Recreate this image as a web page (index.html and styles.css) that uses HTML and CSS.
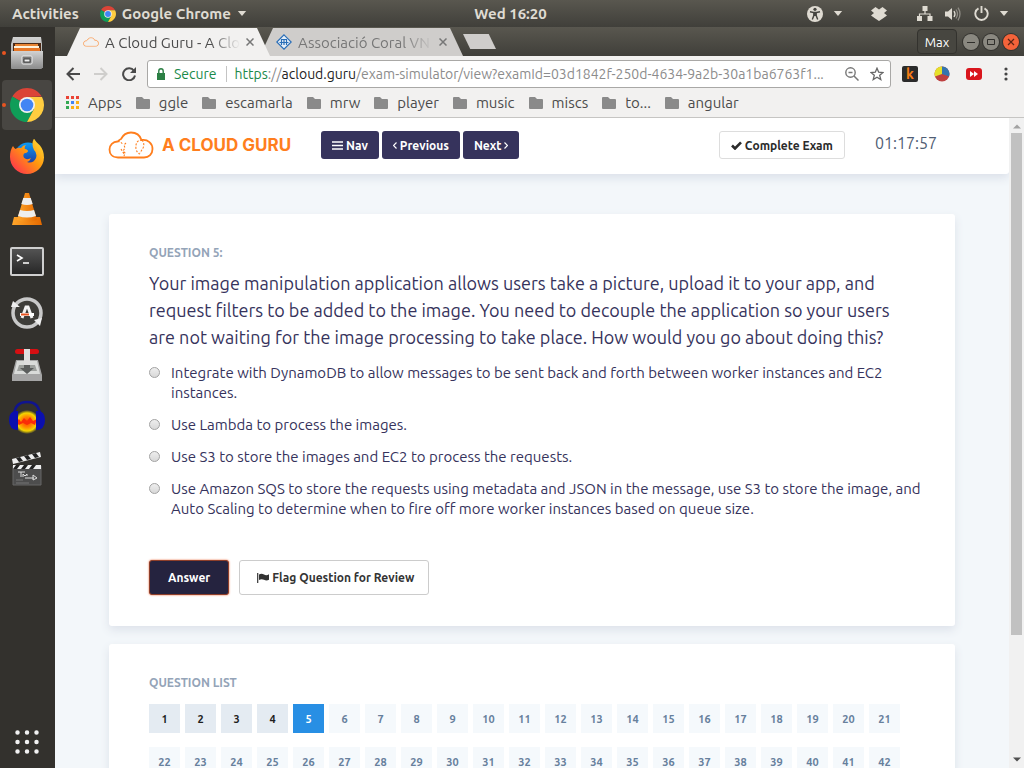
FILE: index.html
```html
<!DOCTYPE html>
<html lang="en">
<head>
<meta charset="utf-8">
<meta name="viewport" content="width=device-width, initial-scale=1">
<title>A Cloud Guru - A Cloud Guru</title>
<link rel="stylesheet" href="styles.css">
</head>
<body>
<svg class="defs" aria-hidden="true">
  <defs>
    <linearGradient id="metal" x1="0" y1="0" x2="0" y2="1"><stop offset="0" stop-color="#d2d2d2"/><stop offset="1" stop-color="#8f8f8f"/></linearGradient>
    <linearGradient id="screen" x1="0" y1="0" x2="0" y2="1"><stop offset="0" stop-color="#555"/><stop offset="1" stop-color="#252525"/></linearGradient>
    <linearGradient id="fox" x1="1" y1="0" x2="0" y2="1"><stop offset="0" stop-color="#ffe53b"/><stop offset=".45" stop-color="#ff980e"/><stop offset="1" stop-color="#ff1f5a"/></linearGradient>
    <linearGradient id="foxblue" x1="0" y1="0" x2="0" y2="1"><stop offset="0" stop-color="#0a9bf5"/><stop offset="1" stop-color="#24218a"/></linearGradient>
    <linearGradient id="cone" x1="0" x2="1"><stop offset="0" stop-color="#ffa62b"/><stop offset="1" stop-color="#e56a00"/></linearGradient>
    <radialGradient id="wave"><stop offset="0" stop-color="#ff3a00"/><stop offset=".45" stop-color="#ff8a00"/><stop offset=".75" stop-color="#f3d500"/><stop offset="1" stop-color="#f3d500" stop-opacity="0"/></radialGradient>
    <symbol id="chrome" viewBox="0 0 34 34">
      <path d="M17 17L2.300 8.500A17 17 0 0 1 31.700 8.500L17 9Z" fill="#db4437"/>
      <path d="M17 17L2.300 8.500A17 17 0 0 0 17 34L24 21Z" fill="#0f9d58"/>
      <path d="M17 9H32A17 17 0 0 1 17 34L24 21Z" fill="#ffcd40"/>
      <circle cx="17" cy="17" r="8" fill="#f1f1f1"/><circle cx="17" cy="17" r="6.300" fill="#4285f4"/>
    </symbol>
    <symbol id="folder" viewBox="0 0 14 12"><path d="M1 0h5l2 2h5a1 1 0 0 1 1 1v8a1 1 0 0 1-1 1H1a1 1 0 0 1-1-1V1a1 1 0 0 1 1-1z" fill="#8a8a8a"/></symbol>
    <symbol id="cloud" viewBox="0 0 46 28"><path d="M10 26.500C4 26.500 1.500 22.500 1.500 18.500C1.500 14 5 10.500 9.500 10.500C10.500 10.500 11 8.500 13 8C15 4 18.500 1.500 23 1.500C28.500 1.500 32 4.500 33.500 9C40 8 44.500 12.500 44.500 18C44.500 23 41 26.500 36 26.500Z" fill="none" stroke="#ff7e1d" stroke-width="1.800"/></symbol>
    <symbol id="caret" viewBox="0 0 10 6"><path d="M0 0h10L5 6z" fill="currentColor"/></symbol>
    <symbol id="cross" viewBox="0 0 8 8"><path d="M.5.5l7 7M7.500.500l-7 7" stroke="currentColor" stroke-width="1.500"/></symbol>
  </defs>
</svg>

<header class="panel">
  <div class="panel-side">
    <button class="panel-btn" type="button">Activities</button>
    <button class="panel-btn" type="button"><svg class="app-logo"><use href="#chrome"/></svg>Google Chrome<svg class="caret"><use href="#caret"/></svg></button>
  </div>
  <time class="clock">Wed 16:20</time>
  <div class="panel-side panel-status">
    <svg width="16" height="16" viewBox="0 0 16 16"><circle cx="8" cy="8" r="8" fill="#dfdbd2"/><circle cx="8" cy="3.300" r="1.600" fill="#45443f"/><path d="M3 5.800l3.500.7h3l3.500-.7M6.800 6.500v3L5.300 13.500M9.200 6.500v3l1.500 4M8 6.500V10" fill="none" stroke="#45443f" stroke-width="1.400"/></svg>
    <svg class="caret access-caret"><use href="#caret"/></svg>
    <svg class="dropbox" width="16" height="14" viewBox="0 0 16 14"><path d="M4.500 0L8 2.500L11.500 0L16 3.500L13 6L16 8.500L12.500 11L8 14L3.500 11L0 8.500L3 6L0 3.500z" fill="#dfdbd2"/></svg>
    <svg class="network" width="16" height="15" viewBox="0 0 16 15"><path d="M5.500 0h5v5h-5zM0 10h5v5H0zM10.500 10h5v5h-5z" fill="#dfdbd2"/><path d="M8 5v3M2.500 10.500V8h10.500v2.500" stroke="#dfdbd2" fill="none" stroke-width="1.200"/></svg>
    <svg class="sound" width="16" height="14" viewBox="0 0 16 14"><path d="M0 4.500h3L7 1v12L3 9.500H0z" fill="#dfdbd2"/><path d="M9 4q2 3 0 6" stroke="#dfdbd2" stroke-width="1.300" fill="none"/><path d="M11 2.500q3 4.500 0 9M13 .7q4 6.300 0 12.600" stroke="#8f8c84" stroke-width="1.300" fill="none"/></svg>
    <svg class="power" width="15" height="15" viewBox="0 0 15 15"><path d="M4.500 2.300a6.200 6.200 0 1 0 6 0M7.500 0v7" stroke="#dfdbd2" stroke-width="1.900" fill="none"/></svg>
    <svg class="caret"><use href="#caret"/></svg>
  </div>
</header>

<div class="desktop">
  <nav class="dock" aria-label="Dock">
    <button class="dock-item running" type="button" aria-label="Files"><svg width="34" height="34" viewBox="0 0 34 34"><path d="M3 1h28l1 7v24a1 1 0 0 1-1 1H2a1 1 0 0 1-1-1V8z" fill="url(#metal)"/><path d="M3 7h28v8H3z" fill="#4d2b17"/><path d="M5 8h23v2H5z" fill="#e88434"/><path d="M4 10h25v2H4z" fill="#fff2dc"/><path d="M4 12h26v3H4z" fill="#e77727"/><path d="M1 15h32v17H1z" fill="url(#metal)"/><rect x="12" y="20" width="10" height="8" rx="1" fill="#777" stroke="#eee"/><path d="M14 23h6v3h-6z" fill="#eee" stroke="#444"/></svg></button>
    <button class="dock-item running focused" type="button" aria-label="Google Chrome"><svg width="34" height="34"><use href="#chrome"/></svg></button>
    <button class="dock-item" type="button" aria-label="Firefox"><svg width="34" height="36" viewBox="0 0 34 36"><circle cx="18" cy="17" r="13.500" fill="url(#foxblue)"/><path d="M3 7q1 2 2.500 3q3-2 5.500-1q2-3 5-3q-2 2-1 4q3 .5 3 2.500q-1 1.500-4 2q-2 4 2 5.500q3 .5 5-1q-1 3-4 4q6 2 9-4q1.500-5-2-8q-3-6 0-11.500q2 4 6 7q4 5 4 12A17 17 0 0 1 17 35A17 17 0 0 1 0 18Q0 11 3 7z" fill="url(#fox)"/></svg></button>
    <button class="dock-item" type="button" aria-label="VLC"><svg width="30" height="34" viewBox="0 0 30 34"><path d="M2 25h26l2 8H0z" fill="url(#cone)"/><path d="M13 1h4l8 27q-10 4-20 0z" fill="url(#cone)"/><path d="M11.300 6h7.400l2 6q-5.700 2-11.400 0zM8 18q7 2 14 0l2 6q-9 3-18 0z" fill="#eee"/></svg></button>
    <button class="dock-item" type="button" aria-label="Terminal"><svg width="34" height="30" viewBox="0 0 34 30"><rect x="1" y="2" width="32" height="27" rx="1" fill="url(#screen)" stroke="#cfcfcf" stroke-width="2"/><path d="M7 9l5 3-5 3M13 17h6" stroke="#fff" stroke-width="1.600" fill="none"/></svg></button>
    <button class="dock-item" type="button" aria-label="Software Updater"><svg width="34" height="34" viewBox="0 0 34 34"><circle cx="17" cy="17" r="14" fill="#3e3d39" stroke="#c9c9c9" stroke-width="3.500"/><path d="M1 11l2-6 7 6zM24 24l8-2-2 8z" fill="#eee"/><path d="M12 22l4-11h2l4 11" fill="none" stroke="#f4f4f4" stroke-width="3"/><path d="M10 17h14v3H10z" fill="#fff"/><path d="M11 17.500h8v2h-8z" fill="#e95420"/></svg></button>
    <button class="dock-item" type="button" aria-label="Installer"><svg width="30" height="34" viewBox="0 0 30 34"><path d="M4 12h22l4 15v6H0v-6z" fill="#a5a5a5"/><path d="M5 13h20l3 13H2z" fill="#d9dbd9"/><path d="M7 17h16l2 6H5z" fill="#9da09d"/><rect x="3" y="1" width="24" height="5" rx="2.500" fill="#d60f12"/><path d="M12 1h6v19h4l-7 6-7-6h4z" fill="#5b5e5d"/><path d="M12 1h6v16h-6z" fill="#dedede"/></svg></button>
    <button class="dock-item" type="button" aria-label="Audacity"><svg width="36" height="34" viewBox="0 0 36 34"><ellipse cx="18" cy="22" rx="13" ry="12" fill="url(#wave)"/><path d="M7 22l3-3 2 3 3-4 3 3 3-4 3 4 4-2-2 6-4-2-4 2-4-2-4 2z" fill="#fa2b08"/><path d="M5 17Q5 2 18 2T31 17" stroke="#10148f" stroke-width="2.500" fill="none"/><path d="M9 11v19Q0 30 0 20T9 11zM27 11v19Q36 30 36 20T27 11z" fill="#0b0fae"/></svg></button>
    <button class="dock-item" type="button" aria-label="Video editor"><svg width="30" height="34" viewBox="0 0 30 34"><path d="M1 14h28v19H1z" fill="#4d4d4d" stroke="#666"/><path d="M0 7L28 0l1 5L1 12zM1 13h28v4H1z" fill="#eee"/><path d="M4 6l4-1 3 4-4 1zM12 4l4-1 3 4-4 1zM20 2l4-1 3 4-4 1zM4 13h4l-3 4H1zM12 13h4l-3 4H9zM20 13h4l-3 4h-4z" fill="#222"/><path d="M6 20h7M9 20v5M11 25v-3l2 2 2-2v2M13 26h9M21 23l4 3-4 2z" stroke="#ddd" fill="none"/><path d="M4 28h7M4 31h13" stroke="#777"/></svg></button>
    <button class="dock-item dock-apps" type="button" aria-label="Show applications"><svg width="24" height="24" viewBox="0 0 24 24"><path d="M2.500 2.500h0M12 2.500h0M21.500 2.500h0M2.500 12h0M12 12h0M21.500 12h0M2.500 21.500h0M12 21.500h0M21.500 21.500h0" stroke="#f2f2f2" stroke-width="4.500" stroke-linecap="round"/></svg></button>
  </nav>

  <div class="browser">
    <div class="tabstrip">
      <div class="tab tab-active"><svg class="tab-icon" viewBox="0 0 46 28"><use href="#cloud"/></svg><span class="tab-title">A Cloud Guru - A Clo</span><button class="tab-close" type="button" aria-label="Close tab"><svg><use href="#cross"/></svg></button></div>
      <div class="tab tab-idle"><svg class="tab-icon" viewBox="0 0 16 16"><path d="M8 .8L15.200 8L8 15.200L.8 8z" fill="#e8f0f8" stroke="#2a6fb8" stroke-width="1.200"/><path d="M3.500 8.500h9M5.500 5.500V11M8 5.500V11M10.500 5.500V11M5 5.500h6" stroke="#2a6fb8" stroke-width="1.200" fill="none"/></svg><span class="tab-title">Associació Coral VN</span><button class="tab-close" type="button" aria-label="Close tab"><svg><use href="#cross"/></svg></button></div>
      <button class="new-tab" type="button" aria-label="New tab"></button>
      <div class="window-controls">
        <button class="profile" type="button">Max</button>
        <button class="win-btn" type="button" aria-label="Minimize"><svg viewBox="0 0 16 16"><path d="M4 8.500h8" stroke="#2f2e2b"/></svg></button>
        <button class="win-btn" type="button" aria-label="Maximize"><svg viewBox="0 0 16 16"><path d="M4.500 5.500h7v5h-7z" fill="none" stroke="#2f2e2b"/></svg></button>
        <button class="win-btn win-close" type="button" aria-label="Close"><svg viewBox="0 0 16 16"><path d="M5 5l6 6M11 5l-6 6" stroke="#5a2415" stroke-width="1.200"/></svg></button>
      </div>
    </div>

    <div class="toolbar">
      <button class="tool" type="button" aria-label="Back"><svg width="14" height="14" viewBox="0 0 14 14"><path d="M14 7H1.500M7.500 1l-6 6 6 6" stroke="#4a4a4a" stroke-width="2" fill="none"/></svg></button>
      <button class="tool" type="button" aria-label="Forward"><svg width="14" height="14" viewBox="0 0 14 14"><path d="M0 7h12.500M6.500 1l6 6-6 6" stroke="#cfcecc" stroke-width="2" fill="none"/></svg></button>
      <button class="tool" type="button" aria-label="Reload"><svg width="14" height="14" viewBox="0 0 14 14"><path d="M12 3.800A6 6 0 1 0 13 8.500" stroke="#4a4a4a" stroke-width="2" fill="none"/><path d="M14 0v6H8z" fill="#4a4a4a"/></svg></button>
      <div class="omnibox">
        <svg width="8" height="12" viewBox="0 0 8 12"><path d="M0 5h8v7H0z" fill="#2c8045"/><path d="M1.800 5V3a2.200 2.200 0 0 1 4.400 0v2" stroke="#2c8045" stroke-width="1.400" fill="none"/></svg>
        <span class="secure">Secure</span>
        <span class="url"><span class="scheme">https</span>://<span class="host">acloud.guru</span>/exam-simulator/view?examId=03d1842f-250d-4634-9a2b-30a1ba6763f1...</span>
        <svg width="14" height="14" viewBox="0 0 14 14"><circle cx="5.500" cy="5.500" r="4.700" stroke="#777" stroke-width="1.400" fill="none"/><path d="M3.500 5.500h4M9 9l4.500 4.500" stroke="#777" stroke-width="1.500"/></svg>
        <svg class="star" width="14" height="14" viewBox="0 0 14 14"><path d="M7 1.200l1.700 4 4.300.3-3.300 2.800 1.100 4.300L7 10.300l-3.800 2.300 1.100-4.300L1 5.500l4.300-.3z" stroke="#666" stroke-width="1.300" fill="none"/></svg>
      </div>
      <div class="extensions">
        <button class="ext ext-k" type="button">k</button>
        <button class="ext" type="button" aria-label="Chart"><svg width="16" height="16" viewBox="0 0 16 16"><circle cx="8" cy="8" r="7.500" fill="#bf4040"/><path d="M8 8V.5A7.500 7.500 0 0 1 15 10.500z" fill="#3574ae"/><path d="M8 8V.5A7.500 7.500 0 0 0 1 10.500z" fill="#e6e02a"/></svg></button>
        <button class="ext" type="button" aria-label="Skip"><svg width="16" height="12" viewBox="0 0 16 12"><rect width="16" height="12" rx="3" fill="#d9151c"/><path d="M4 3l4 3-4 3zM8 3l4 3-4 3z" fill="#fff"/></svg></button>
        <button class="ext ext-menu" type="button" aria-label="Menu"><svg width="4" height="14" viewBox="0 0 4 14"><path d="M2 2h0M2 7h0M2 12h0" stroke="#444" stroke-width="3.200" stroke-linecap="round"/></svg></button>
      </div>
    </div>

    <nav class="bookmarks" aria-label="Bookmarks">
      <a href="#"><svg class="apps" viewBox="0 0 13 13"><path d="M0 0h3v3H0zM5 0h3v3H5zM10 0h3v3h-3z" fill="#ea4335"/><path d="M0 5h3v3H0zM0 10h3v3H0z" fill="#34a853"/><path d="M5 5h3v3H5z" fill="#4285f4"/><path d="M10 5h3v3h-3zM5 10h3v3H5zM10 10h3v3h-3z" fill="#fbb016"/></svg>Apps</a>
      <a href="#"><svg><use href="#folder"/></svg>ggle</a>
      <a href="#"><svg><use href="#folder"/></svg>escamarla</a>
      <a href="#"><svg><use href="#folder"/></svg>mrw</a>
      <a href="#"><svg><use href="#folder"/></svg>player</a>
      <a href="#"><svg><use href="#folder"/></svg>music</a>
      <a href="#"><svg><use href="#folder"/></svg>miscs</a>
      <a href="#"><svg><use href="#folder"/></svg>to...</a>
      <a href="#"><svg><use href="#folder"/></svg>angular</a>
    </nav>

    <div class="viewport">
      <div class="page">
        <header class="site-header">
          <a class="brand" href="#"><svg width="46" height="28" viewBox="0 0 46 28"><use href="#cloud"/><path d="M9.500 10.500q4 0 5 3M18 12l-2 2 1 3-2 3 2 2-1 3M13 18l3 5M34 9q-7 0-6 9 1 4 4 5M34 9q3 4 1 8l-3 5" fill="none" stroke="#ff7e1d" stroke-width="1.100" stroke-dasharray="2 1.500"/></svg><span>A CLOUD GURU</span></a>
          <div class="nav-buttons">
            <button class="btn btn-navy" type="button"><svg width="11" height="9" viewBox="0 0 11 9"><path d="M0 1h11M0 4.500h11M0 8h11" stroke="#fff" stroke-width="1.700"/></svg>Nav</button>
            <button class="btn btn-navy" type="button"><svg width="4" height="7" viewBox="0 0 4 7"><path d="M3.500.5l-3 3 3 3" stroke="#fff" stroke-width="1.200" fill="none"/></svg>Previous</button>
            <button class="btn btn-navy" type="button">Next<svg width="4" height="7" viewBox="0 0 4 7"><path d="M.5.5l3 3-3 3" stroke="#fff" stroke-width="1.200" fill="none"/></svg></button>
          </div>
          <button class="btn btn-light" type="button"><svg width="11" height="9" viewBox="0 0 11 9"><path d="M1 4.500l3 3L10 1.300" stroke="#2b2b2b" stroke-width="2.600" fill="none"/></svg>Complete Exam</button>
          <span class="timer">01:17:57</span>
        </header>

        <main class="content">
          <form class="card">
            <p class="eyebrow">QUESTION 5:</p>
            <h1 class="question">Your image manipulation application allows users take a picture, upload it to your app, and request filters to be added to the image. You need to decouple the application so your users are not waiting for the image processing to take place. How would you go about doing this?</h1>
            <div class="options">
              <label class="option"><input type="radio" name="answer"><span>Integrate with DynamoDB to allow messages to be sent back and forth between worker instances and EC2 instances.</span></label>
              <label class="option"><input type="radio" name="answer"><span>Use Lambda to process the images.</span></label>
              <label class="option"><input type="radio" name="answer"><span>Use S3 to store the images and EC2 to process the requests.</span></label>
              <label class="option"><input type="radio" name="answer"><span>Use Amazon SQS to store the requests using metadata and JSON in the message, use S3 to store the image, and Auto Scaling to determine when to fire off more worker instances based on queue size.</span></label>
            </div>
            <div class="actions">
              <button class="btn btn-answer" type="button">Answer</button>
              <button class="btn btn-flag" type="button"><svg width="12" height="10" viewBox="0 0 12 10"><path d="M.7 0v10" stroke="#333" stroke-width="1.200"/><path d="M2 1.500q2.500-1.500 5 0t5-.3v5.600q-2.500 1.300-5 0t-5 .3z" fill="#333"/></svg>Flag Question for Review</button>
            </div>
          </form>

          <section class="card">
            <h2 class="eyebrow">QUESTION LIST</h2>
            <div class="numbers">
              <button class="num done" type="button">1</button><button class="num done" type="button">2</button><button class="num done" type="button">3</button><button class="num done" type="button">4</button><button class="num current" type="button">5</button><button class="num" type="button">6</button><button class="num" type="button">7</button><button class="num" type="button">8</button><button class="num" type="button">9</button><button class="num" type="button">10</button><button class="num" type="button">11</button><button class="num" type="button">12</button><button class="num" type="button">13</button><button class="num" type="button">14</button><button class="num" type="button">15</button><button class="num" type="button">16</button><button class="num" type="button">17</button><button class="num" type="button">18</button><button class="num" type="button">19</button><button class="num" type="button">20</button><button class="num" type="button">21</button>
              <button class="num" type="button">22</button><button class="num" type="button">23</button><button class="num" type="button">24</button><button class="num" type="button">25</button><button class="num" type="button">26</button><button class="num" type="button">27</button><button class="num" type="button">28</button><button class="num" type="button">29</button><button class="num" type="button">30</button><button class="num" type="button">31</button><button class="num" type="button">32</button><button class="num" type="button">33</button><button class="num" type="button">34</button><button class="num" type="button">35</button><button class="num" type="button">36</button><button class="num" type="button">37</button><button class="num" type="button">38</button><button class="num" type="button">39</button><button class="num" type="button">40</button><button class="num" type="button">41</button><button class="num" type="button">42</button>
            </div>
          </section>
        </main>
      </div>
      <div class="scrollbar" aria-hidden="true">
        <svg viewBox="0 0 8 4"><path d="M4 0l4 4H0z" fill="#a3a3a3"/></svg>
        <div class="track"><div class="thumb"></div></div>
        <svg viewBox="0 0 8 4"><path d="M0 0h8L4 4z" fill="#505050"/></svg>
      </div>
    </div>
  </div>
</div>
</body>
</html>
```
FILE: styles.css
```css
* { box-sizing: border-box; }

body {
  margin: 0;
  height: 100vh;
  display: flex;
  flex-direction: column;
  overflow: hidden;
  font-family: Ubuntu, "Noto Sans", "Open Sans", sans-serif;
  background: #33312d;
}

button {
  font: inherit;
  color: inherit;
  border: 0;
  padding: 0;
  margin: 0;
  background: none;
}

a { color: inherit; text-decoration: none; }
svg { display: block; flex: none; }
.defs { position: absolute; width: 0; height: 0; }
.caret { width: 10px; height: 5px; }

/* Desktop panel */
.panel {
  display: flex;
  align-items: center;
  flex: none;
  height: 27px;
  padding: 0 12px;
  font-size: 15px;
  font-weight: 700;
  color: #dfdbd2;
  background: linear-gradient(#59574f, #403f3a);
}
.panel-side { flex: 1; display: flex; align-items: center; gap: 21px; }
.panel-btn { display: flex; align-items: center; gap: 6px; }
.app-logo { width: 16px; height: 16px; }
.panel-status { justify-content: flex-end; gap: 0; padding-right: 3px; }
.access-caret { margin-left: 10px; }
.dropbox { margin-left: 28px; }
.network { margin-left: 30px; }
.sound { margin-left: 12px; }
.power { margin: 0 10px 0 13px; }

.desktop { flex: 1; display: flex; min-height: 0; }

/* Dock */
.dock {
  flex: none;
  width: 55px;
  display: flex;
  flex-direction: column;
  gap: 2px;
  padding: 1px 3px 1px 2px;
}
.dock-item {
  position: relative;
  display: flex;
  align-items: center;
  justify-content: center;
  height: 50px;
  border-radius: 4px;
}
.focused { background: #484642; }
.running::before {
  content: "";
  position: absolute;
  left: 0;
  top: 23px;
  width: 4px;
  height: 4px;
  border-radius: 50%;
  background: #e95420;
}
.dock-apps { margin-top: auto; }

/* Browser */
.browser { flex: 1; min-width: 0; display: flex; flex-direction: column; background: #f2f1f0; }

.tabstrip {
  display: flex;
  align-items: flex-end;
  flex: none;
  height: 29px;
  padding: 0 5px 0 12px;
  background: linear-gradient(#59574f, #403f3a);
}
.tab {
  display: flex;
  align-items: center;
  width: 203px;
  height: 28px;
  padding: 0 16px;
  gap: 6px;
  font-size: 15px;
  clip-path: polygon(13px 0, calc(100% - 13px) 0, 100% 100%, 0 100%);
}
.tab-active { z-index: 1; background: #f2f1f0; color: #4b4b4b; }
.tab-idle { margin-left: -10px; background: #cfcdcb; color: #777; }
.tab-icon { width: 16px; height: 16px; }
.tab-title {
  flex: 1;
  min-width: 0;
  overflow: hidden;
  white-space: nowrap;
  -webkit-mask-image: linear-gradient(90deg, #000 78%, transparent);
  mask-image: linear-gradient(90deg, #000 78%, transparent);
}
.tab-close { color: #777; }
.tab-close svg { width: 8px; height: 8px; }
.new-tab {
  align-self: center;
  width: 33px;
  height: 15px;
  background: #cfcdcb;
  clip-path: polygon(0 0, 78% 0, 100% 100%, 22% 100%);
}
.window-controls { margin-left: auto; align-self: center; display: flex; align-items: center; gap: 4px; }
.profile {
  width: 40px;
  height: 25px;
  margin-right: 2px;
  border: 1px solid #33322e;
  border-radius: 4px;
  background: #474640;
  color: #fff;
  font-size: 13px;
}
.win-btn {
  width: 16px;
  height: 16px;
  border-radius: 50%;
  background: #8a8880;
  box-shadow: 0 0 0 1px #33322e;
}
.win-close { background: #f4633a; }

.toolbar { display: flex; align-items: center; flex: none; height: 36px; padding: 0 16px 0 11px; }
.tool { margin-right: 14px; }
.omnibox {
  flex: 1;
  min-width: 0;
  display: flex;
  align-items: center;
  height: 28px;
  margin-left: -3px;
  padding: 0 6px 0 9px;
  border: 1px solid #a9a8a6;
  border-radius: 3px;
  background: #fff;
  font-size: 14px;
}
.secure { margin: 0 8px 0 9px; padding-right: 9px; border-right: 1px solid #c4c4c4; line-height: 16px; color: #1b8a4a; }
.url { flex: 1; min-width: 0; white-space: nowrap; color: #8c8c8c; }
.scheme { color: #1b8a4a; }
.host { color: #222; }
.star { margin-left: 11px; }
.extensions { display: flex; align-items: center; gap: 16px; margin-left: 11px; }
.ext-k {
  width: 16px;
  height: 16px;
  border-radius: 2px;
  background: #2b2b2b;
  color: #f57c14;
  font-size: 14px;
  font-weight: 700;
  line-height: 16px;
}
.ext-menu { margin-left: 6px; }

.bookmarks {
  display: flex;
  align-items: center;
  gap: 14px;
  flex: none;
  height: 26px;
  padding: 0 11px 4px;
  border-bottom: 1px solid #c6c5c3;
  font-size: 15px;
  color: #4b4b4b;
}
.bookmarks a { display: flex; align-items: center; gap: 9px; }
.bookmarks svg { width: 14px; height: 12px; }
.bookmarks .apps { width: 13px; height: 13px; }

/* Page */
.viewport { flex: 1; min-height: 0; display: flex; }
.page { flex: 1; min-width: 0; overflow: hidden; background: #f3f7fa; }

.site-header {
  display: flex;
  align-items: center;
  height: 56px;
  padding: 0 72px 2px 53px;
  background: #fff;
  border-radius: 0 0 3px 0;
  box-shadow: 0 4px 10px #dbe0e9;
}
.brand {
  display: flex;
  align-items: center;
  gap: 8px;
  font-family: Inter, sans-serif;
  font-size: 17px;
  font-weight: 700;
  color: #ff7e1d;
}
.nav-buttons { display: flex; gap: 3px; margin: 0 auto 0 30px; }
.btn {
  display: flex;
  align-items: center;
  justify-content: center;
  gap: 3px;
  height: 28px;
  padding: 0 11px;
  border-radius: 3px;
  font-size: 12px;
  font-weight: 700;
  white-space: nowrap;
}
.btn-navy { background: #36335c; color: #fff; }
.btn-light { border: 1px solid #ddd; background: #fff; color: #2b2b2b; }
.timer { margin: 0 0 5px 30px; font-size: 16px; line-height: 20px; color: #4f5d73; }

.content { display: flex; flex-direction: column; gap: 18px; padding: 40px 54px 0; }
.card {
  padding: 31px 31px 31px 40px;
  border-radius: 3px;
  background: #fff;
  box-shadow: 0 4px 10px #dde2ea;
}
.eyebrow { margin: 0; font-size: 12px; line-height: 16px; font-weight: 700; color: #94a4b8; }
.question {
  margin: 9px 0 12px;
  padding-right: 10px;
  font-size: 18px;
  line-height: 27px;
  font-weight: 400;
  color: #36335c;
}
.options { display: flex; flex-direction: column; gap: 12px; }
.option {
  display: flex;
  align-items: flex-start;
  gap: 11px;
  font-size: 15px;
  line-height: 20px;
  color: #36335c;
}
.option input {
  appearance: none;
  flex: none;
  width: 11px;
  height: 11px;
  margin: 4px 0 0;
  border: 1px solid #a2a2a2;
  border-radius: 50%;
  background: linear-gradient(#eee, #d8d8d8);
}
.actions { display: flex; gap: 10px; margin-top: 41px; }
.actions .btn { height: 35px; }
.btn-answer {
  padding: 0 18px;
  border: 1px solid #8f3f2a;
  background: #25233f;
  color: #fff;
  box-shadow: 0 0 2px #e95420;
}
.btn-flag { padding: 0 14px 0 17px; border: 1px solid #ccc; color: #333; }

.numbers { display: flex; flex-wrap: wrap; gap: 14px 5px; margin-top: 13px; }
.num {
  width: 31px;
  height: 29px;
  background: #f5f9fc;
  color: #67809c;
  font-size: 11px;
  font-weight: 700;
}
.done { background: #e4ebf2; color: #1e1e1e; }
.current { background: #288fe4; color: #fff; }

/* Scrollbar */
.scrollbar {
  flex: none;
  width: 15px;
  display: flex;
  flex-direction: column;
  align-items: center;
  justify-content: space-between;
  gap: 4px;
  padding: 6px 2px;
  background: #f1f1f1;
}
.scrollbar svg { width: 8px; height: 5px; }
.track { flex: 1; align-self: stretch; }
.thumb { height: 81%; background: #c1c1c1; }
```
